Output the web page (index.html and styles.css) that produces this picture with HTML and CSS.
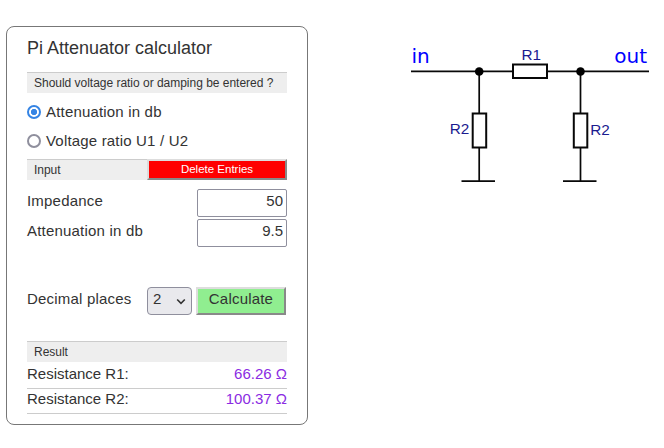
FILE: index.html
```
<!DOCTYPE html>
<html lang="en">
<head>
<meta charset="utf-8">
<title>Pi Attenuator calculator</title>
<link rel="stylesheet" href="styles.css">
</head>
<body>
<main class="page">
  <form class="card">
    <h1 class="title">Pi Attenuator calculator</h1>
    <div class="bar">Should voltage ratio or damping be entered ?</div>
    <label class="choice"><input class="radio" type="radio" name="mode" checked><span>Attenuation in db</span></label>
    <label class="choice"><input class="radio" type="radio" name="mode"><span>Voltage ratio U1 / U2</span></label>
    <div class="bar bar-input"><span>Input</span><button class="delete" type="button">Delete Entries</button></div>
    <label class="field"><span>Impedance</span><input class="number" type="text" value="50"></label>
    <label class="field"><span>Attenuation in db</span><input class="number" type="text" value="9.5"></label>
    <div class="actions">
      <span class="places">Decimal places</span>
      <div class="select"><span>2</span><svg width="10" height="7" viewBox="0 0 10 7"><path d="M1.200 1.500 5 5.300 8.800 1.500" fill="none" stroke="#333" stroke-width="1.6"/></svg></div>
      <button class="calculate" type="button">Calculate</button>
    </div>
    <div class="bar">Result</div>
    <div class="result"><span>Resistance R1:</span><span class="value">66.26 Ω</span></div>
    <div class="result"><span>Resistance R2:</span><span class="value">100.37 Ω</span></div>
  </form>
  <svg class="circuit" width="254" height="160" viewBox="400 35 254 160">
    <g fill="none" stroke="#080808" stroke-width="2">
      <path stroke-width="1.700" d="M411 71.3H513M547 71.3H649M479.2 71V113M479.2 148V181M580.5 71V113M580.5 148V181M461.500 181.200H495M563 181.200H596.500"/>
      <rect x="513" y="64.500" width="34" height="13.500"/>
      <rect x="472.700" y="113.500" width="13.500" height="34"/>
      <rect x="573.800" y="113.500" width="13.500" height="34"/>
    </g>
    <circle cx="479.200" cy="71.500" r="4.300"/>
    <circle cx="580.500" cy="71.500" r="4.300"/>
    <text class="port" x="411.500" y="62.700">in</text>
    <text class="port" x="614.300" y="62.700">out</text>
    <text class="part" x="521.500" y="60">R1</text>
    <text class="part" x="449.800" y="134">R2</text>
    <text class="part" x="590.300" y="135">R2</text>
  </svg>
</main>
</body>
</html>
```
FILE: styles.css
```
* { box-sizing: border-box; }
body {
  margin: 0;
  background: #fff;
  color: #333;
  font: 15px/20px "Liberation Sans", Arial, sans-serif;
}
.page {
  display: flex;
  align-items: flex-start;
  justify-content: space-between;
  width: 664px;
  height: 448px;
  padding: 26px 10px 0 6px;
}
.card {
  width: 302px;
  height: 399px;
  padding: 11px 20px 0;
  border: 1px solid #777;
  border-radius: 8px;
}
.title {
  height: 34px;
  margin: 0;
  font-size: 18px;
  font-weight: 400;
  line-height: 20px;
}
.bar {
  height: 21px;
  padding-left: 7px;
  border-top: 1px solid #ccc;
  background: #eee;
  font-size: 12px;
  letter-spacing: -0.02px;
  line-height: 20px;
}
.choice {
  display: flex;
  align-items: center;
  gap: 5px;
  height: 29px;
  letter-spacing: 0.18px;
}
.bar + .choice { margin-top: 4px; }
.radio {
  appearance: none;
  width: 14px;
  height: 14px;
  margin: 0;
  border: 2px solid #8f8f9d;
  border-radius: 50%;
}
.radio:checked {
  border-color: #3584e4;
  background: radial-gradient(circle, #3584e4 2.8px, #fff 3.4px);
}
.bar-input {
  display: flex;
  justify-content: space-between;
  margin: 4px 0 9px;
}
.delete {
  width: 140px;
  height: 21px;
  margin-top: -1px;
  padding: 0 0 2px;
  border: 2px outset #ddd;
  background: #f00;
  color: #fff;
  font: 11.5px/14px "Liberation Sans", Arial, sans-serif;
}
.field {
  display: flex;
  justify-content: space-between;
  height: 28px;
  margin-bottom: 2px;
  letter-spacing: 0.2px;
  line-height: 24px;
}
.number {
  width: 90px;
  height: 28px;
  padding: 0 3px 5px;
  border: 1px solid #8f8f9d;
  border-radius: 2px;
  background: #fff;
  color: #333;
  font: 15px "Liberation Sans", Arial, sans-serif;
  text-align: right;
}
.actions {
  display: flex;
  height: 28px;
  margin: 40px 0 26px;
  letter-spacing: 0.2px;
  line-height: 24px;
}
.places { width: 120px; }
.select {
  display: flex;
  justify-content: space-between;
  width: 45px;
  height: 28px;
  margin-right: 4px;
  padding: 0 5px;
  border: 1px solid #8f8f9d;
  border-radius: 4px;
  background: #e9e9ed;
  line-height: 22px;
}
.select svg { margin-top: 10px; }
.calculate {
  width: 90px;
  height: 28px;
  padding: 0 0 4px;
  border: 2px outset #ddd;
  background: #90ee90;
  color: #333;
  font: 15px/20px "Liberation Sans", Arial, sans-serif;
  letter-spacing: 0.2px;
}
.result {
  display: flex;
  justify-content: space-between;
  height: 25px;
  border-bottom: 1px solid #ccc;
  line-height: 20px;
}
.bar + .result {
  height: 27px;
  padding-top: 2px;
}
.value { color: #8a2be2; }
.circuit { margin-top: 9px; }
.port {
  fill: #00f;
  font: 20px "DejaVu Sans", sans-serif;
}
.part {
  fill: #1b1b8f;
  font: 15.3px "Liberation Sans", Arial, sans-serif;
}
```
